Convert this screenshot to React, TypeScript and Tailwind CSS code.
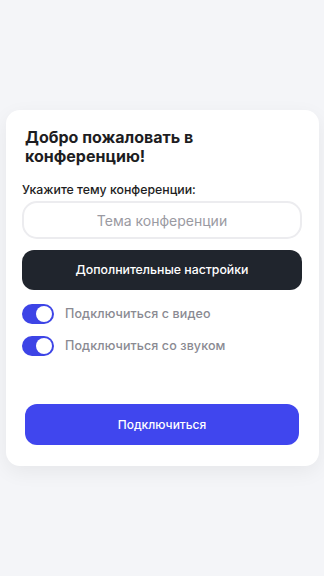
import React, { useState } from "react";

const Toggle: React.FC<{ on: boolean; onChange: () => void; label: string }> = ({ on, onChange, label }) => (
  <button onClick={onChange} className="flex items-center gap-[11px] h-[20px]">
    <span
      className={`flex items-center w-[32px] h-[20px] rounded-full px-[2px] ${
        on ? "bg-[#3d44e6] justify-end" : "bg-gray-300 justify-start"
      }`}
    >
      <span className="w-[16px] h-[16px] rounded-full bg-white" />
    </span>
    <span className="text-[12.5px] text-[#8a8a92] font-medium tracking-[0.1px]">{label}</span>
  </button>
);

export default function App() {
  const [topic, setTopic] = useState("");
  const [video, setVideo] = useState(true);
  const [audio, setAudio] = useState(true);

  return (
    <div
      className="w-[324px] h-[576px] bg-[#f4f5f8] pt-[110px] px-[6px]"
      style={{ fontFamily: "Inter, 'Noto Sans', sans-serif" }}
    >
      <div className="w-[313px] h-[356px] bg-white rounded-[14px] shadow-[0_6px_20px_rgba(0,0,0,0.06)] pt-[18px] px-[16px] flex flex-col">
        <h1 className="pl-[3px] text-[16px] leading-[19px] font-bold text-[#1d1d22]">
          Добро пожаловать в<br />конференцию!
        </h1>
        <div className="mt-[15px] text-[12.3px] text-[#1d1d22] font-medium">Укажите тему конференции:</div>
        <input
          value={topic}
          onChange={(e) => setTopic(e.target.value)}
          placeholder="Тема конференции"
          className="mt-[2px] w-[280px] h-[38px] rounded-[15px] border-2 border-[#ececef] text-center text-[14px] text-[#333] placeholder:text-[#9a9aa2] outline-none"
        />
        <button className="mt-[11px] w-[280px] h-[40px] rounded-[12px] bg-[#20252d] text-white text-[12.3px] font-medium">
          Дополнительные настройки
        </button>
        <div className="mt-[14px] flex flex-col gap-[12px]">
          <Toggle on={video} onChange={() => setVideo(!video)} label="Подключиться с видео" />
          <Toggle on={audio} onChange={() => setAudio(!audio)} label="Подключиться со звуком" />
        </div>
        <button className="mt-[48px] ml-[3px] w-[274px] h-[41px] rounded-[12px] bg-[#4046ee] text-white text-[12px] font-medium">
          Подключиться
        </button>
      </div>
    </div>
  );
}
